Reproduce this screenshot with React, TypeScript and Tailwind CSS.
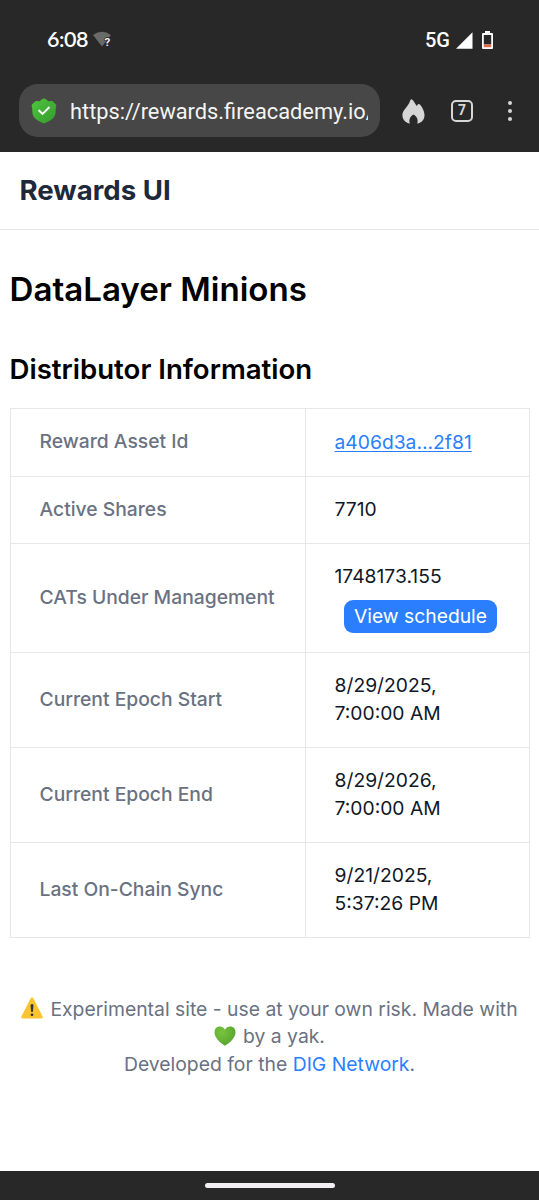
import { ReactNode } from 'react';

interface InfoRow {
  label: string;
  value: ReactNode;
  height: string;
}

const rows: InfoRow[] = [
  {
    label: 'Reward Asset Id',
    value: (
      <a href="#" className="relative top-[0.5px] text-[#2b7fff] underline underline-offset-[2px] decoration-[1px]">
        a406d3a...2f81
      </a>
    ),
    height: 'h-[67.5px]'
  },
  { label: 'Active Shares', value: '7710', height: 'h-[67.5px]' },
  {
    label: 'CATs Under Management',
    value: (
      <div className="flex flex-col items-start">
        <span>1748173.155</span>
        <button className="mt-[9px] ml-[9.5px] h-[33px] w-[153px] whitespace-nowrap rounded-[9px] bg-[#2b7fff] text-white">
          View schedule
        </button>
      </div>
    ),
    height: 'h-[109px]'
  },
  { label: 'Current Epoch Start', value: <>8/29/2025,<br />7:00:00 AM</>, height: 'h-[95px]' },
  { label: 'Current Epoch End', value: <>8/29/2026,<br />7:00:00 AM</>, height: 'h-[95px]' },
  { label: 'Last On-Chain Sync', value: <>9/21/2025,<br />5:37:26 PM</>, height: 'h-[95px]' }
];

function WifiUnknown() {
  return (
    <svg width="20" height="18" viewBox="0 0 20 18" className="ml-[5px]">
      <path d="M0 4Q9 -2.500 18 4L9 15.500Z" fill="#6a6a6a" />
      <text x="11.500" y="15" fontSize="11.500" fontWeight="600" fill="#fff" stroke="#282828" strokeWidth="1.500" paintOrder="stroke" fontFamily="Roboto, sans-serif">
        ?
      </text>
    </svg>
  );
}

function Shield() {
  return (
    <svg width="26" height="26" viewBox="0 0 26 26">
      <defs>
        <linearGradient id="shield" x1="0" y1="0" x2="1" y2="1">
          <stop offset="0" stopColor="#4fc63f" />
          <stop offset="1" stopColor="#349a2c" />
        </linearGradient>
      </defs>
      <path
        d="M13 .5C14.200 .5 15.600 1.500 17 3C18.500 3.600 20 2.600 21.500 3.300C22.800 4 23.800 5.500 25.200 6.800C25.600 8 24.800 9.500 24.700 11.500C24.700 14 24.600 16.500 23.300 18.800C21 22 17 24.300 13 25.500C9 24.300 5 22 2.700 18.800C1.400 16.500 1.300 14 1.300 11.500C1.200 9.500 .4 8 .8 6.800C2.200 5.500 3.200 4 4.500 3.300C6 2.600 7.500 3.600 9 3C10.400 1.500 11.800 .5 13 .5Z"
        fill="url(#shield)"
      />
      <path d="M7.500 12L11.500 16L18.500 9" fill="none" stroke="#fff" strokeWidth="1.900" />
    </svg>
  );
}

function Flame() {
  return (
    <svg width="23" height="25" viewBox="0 0 23 25" fill="#d6d6d6">
      <path d="M9.500 .3C10.600 .3 13 4 14.600 7C15.400 6.200 15.600 4.900 16.800 4.900C18.500 5 22.500 11 22.500 16C22.500 20.500 19.800 23.800 15.200 24.600C16.500 21.500 15 17.500 11.500 15.600C8 17.500 6.500 21.500 7.900 24.600C3.500 23.900 .4 20.500 .4 16C.4 11 6.500 7.500 8 2Q8.400 .3 9.500 .3Z" />
    </svg>
  );
}

function StatusBar() {
  return (
    <div className="flex h-[80px] items-center pl-[47px] pr-[46px] text-white">
      <span className="font-['Lato',sans-serif] text-[21.5px] font-semibold tracking-[-0.5px]">6:08</span>
      <WifiUnknown />
      <span className="ml-auto mr-[6px] pt-[2px] font-['Roboto',sans-serif] text-[20px] font-medium">5G</span>
      <svg width="17" height="17" viewBox="0 0 17 17" fill="#fff">
        <path d="M16.500 .3V16.700H0Z" />
      </svg>
      <svg width="11" height="18" viewBox="0 0 11 18" className="ml-[9px]">
        <path d="M3 0H8V2H10Q11 2 11 3V17Q11 18 10 18H1Q0 18 0 17V3Q0 2 1 2H3Z" fill="#fff" />
        <path d="M1.800 4H9.200V13.500H1.800Z" fill="#282828" />
        <path d="M1.800 13.500H9.200V16.200H1.800Z" fill="#e8694a" />
      </svg>
    </div>
  );
}

function AddressBar() {
  return (
    <div className="flex h-[72px] items-start pl-[19px] pt-[4px]">
      <div className="flex h-[53px] w-[361px] items-center rounded-[19px] bg-[#474747] pl-[12px]">
        <Shield />
        <div className="ml-[13px] mt-[3px] w-[298px] overflow-hidden whitespace-nowrap font-['Roboto',sans-serif] text-[21.8px] leading-[30px] text-[#f4f4f4]">
          https://rewards.fireacademy.io/
        </div>
      </div>
      <div className="flex h-[53px] flex-1 items-center pt-[1px] text-[#d6d6d6]">
        <div className="ml-[22px]">
          <Flame />
        </div>
        <div className="ml-[26px] flex size-[22px] items-center justify-center rounded-[5px] border-2 border-[#d6d6d6] font-['Roboto',sans-serif] text-[14px] font-bold">
          7
        </div>
        <div className="ml-[35px] flex flex-col gap-[4px]">
          <span className="size-[4px] rounded-full bg-[#d6d6d6]" />
          <span className="size-[4px] rounded-full bg-[#d6d6d6]" />
          <span className="size-[4px] rounded-full bg-[#d6d6d6]" />
        </div>
      </div>
    </div>
  );
}

function Warning() {
  return (
    <svg width="22" height="22" viewBox="0 0 22 22" className="mr-[7px] inline-block align-[-3px]">
      <path d="M9.800 1Q11 -.7 12.200 1L21.600 19.500Q22 21.400 20.300 21.600H1.700Q0 21.400 .4 19.500Z" fill="#fcc52f" />
      <path d="M9.500 8Q11 6 12.500 8L11.900 14.600Q11 15.600 10.100 14.600Z" fill="#303438" />
      <circle cx="11" cy="17.800" r="1.400" fill="#303438" />
    </svg>
  );
}

function GreenHeart() {
  return (
    <svg width="22" height="20" viewBox="0 0 22 20" className="mr-[7px] inline-block align-[-3px]">
      <defs>
        <radialGradient id="heart" cx=".35" cy=".3" r=".75">
          <stop offset="0" stopColor="#79c33d" />
          <stop offset="1" stopColor="#55a42e" />
        </radialGradient>
      </defs>
      <path d="M11 3.700C13 -.2 18 -.3 20.300 2.300C24.500 8.500 17 16.300 11 19.700C5 16.300 -2.500 8.500 1.700 2.300C4 -.3 9 -.2 11 3.700Z" fill="url(#heart)" />
    </svg>
  );
}

export default function App() {
  return (
    <div className="flex h-[1200px] w-[539px] flex-col overflow-hidden bg-white font-['Inter',sans-serif] text-[19.3px] leading-[27.6px]">
      <div className="h-[152px] shrink-0 bg-[#282828]">
        <StatusBar />
        <AddressBar />
      </div>

      <header className="flex h-[78px] shrink-0 items-center border-b border-[#e5e7eb] px-[19.5px]">
        <span className="text-[27.6px] font-bold text-[#1e293b]">Rewards UI</span>
      </header>

      <main className="pl-[9.5px]">
        <h1 className="mt-[39px] text-[33.1px] font-semibold leading-[40px] text-black">DataLayer Minions</h1>
        <h2 className="mt-[41px] text-[27.6px] font-semibold leading-[38px] text-black">Distributor Information</h2>

        <table className="mt-[20px] w-[519px] table-fixed border-collapse border border-[#e5e7eb]">
          <colgroup>
            <col className="w-[295px]" />
            <col className="w-[224px]" />
          </colgroup>
          <tbody>
            {rows.map((row) => (
              <tr key={row.label} className={row.height}>
                <td className="border border-[#e5e7eb] py-0 pl-[29px] font-medium text-[#6a7282]">{row.label}</td>
                <td className="border border-[#e5e7eb] py-0 pl-[29px] text-[#101828]">{row.value}</td>
              </tr>
            ))}
          </tbody>
        </table>
      </main>

      <footer className="mt-[57.5px] text-center text-[19.35px] text-[#6a7282]">
        <div>
          <Warning />
          Experimental site - use at your own risk. Made with
        </div>
        <div>
          <GreenHeart />
          by a yak.
        </div>
        <div>
          Developed for the <a href="#" className="text-[#2b7fff]">DIG Network</a>.
        </div>
      </footer>

      <div className="mt-auto flex h-[29px] shrink-0 items-center justify-center bg-[#282828]">
        <div className="h-[5px] w-[130px] rounded-full bg-[#f4eff2]" />
      </div>
    </div>
  );
}
